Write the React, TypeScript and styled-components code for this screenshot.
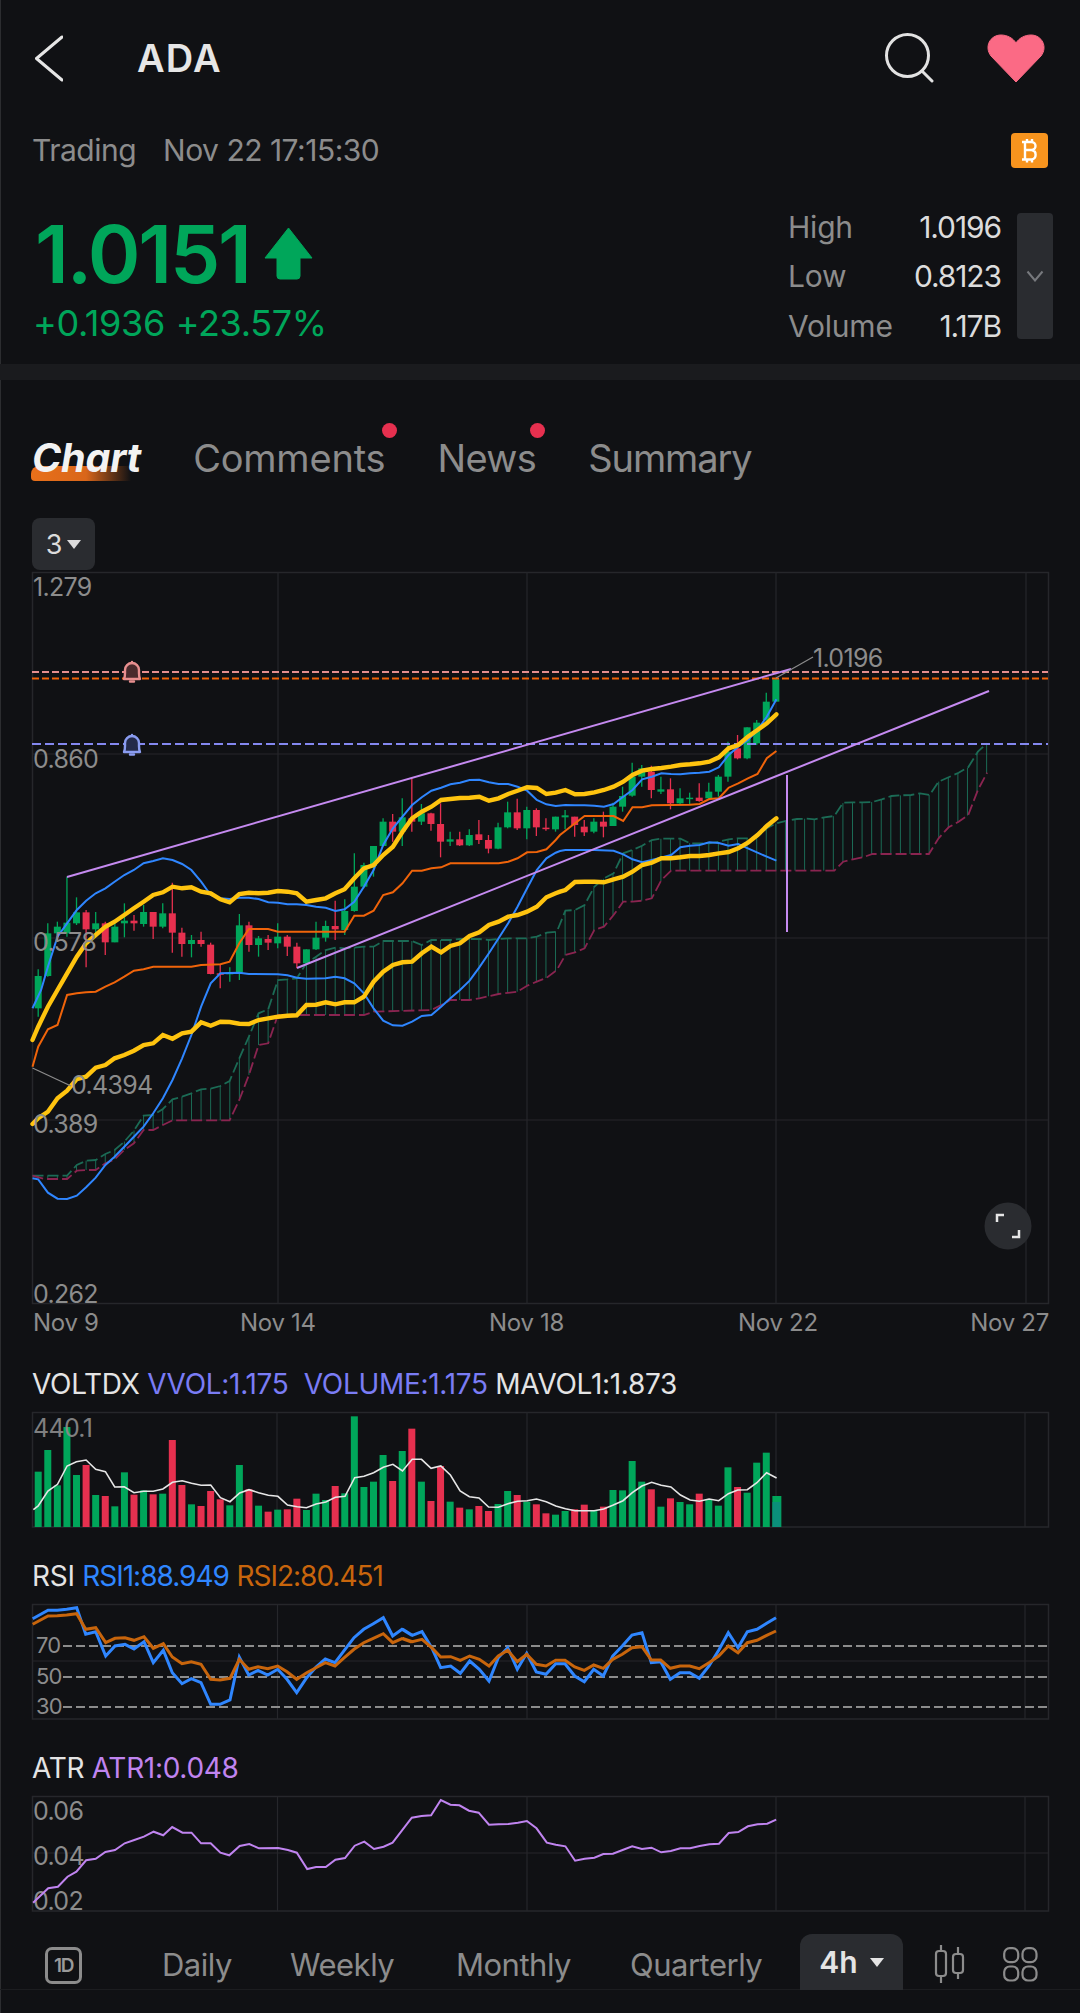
import React from "react";
import styled, { createGlobalStyle } from "styled-components";

const GREEN = "#00a65a";
const RED = "#e6304f";
const GRID = "#26272b";
const MUTED = "#8c8c8c";
const STEP = 9.58;
const START = 38.2;

type Pt = [number, number];

// readings taken from three crops of the chart, each has its own origin and scale
const scaled = (flat: number[], ox: number, oy: number): Pt[] => {
    const out: Pt[] = [];
    for (let i = 0; i < flat.length; i += 2) {
        out.push([ox + flat[i] / 2.8, oy + flat[i + 1] / 3]);
    }
    return out;
};
const a = (flat: number[]) => scaled(flat, 0, 560);
const b = (flat: number[]) => scaled(flat, 520, 620);
const c = (flat: number[]) => scaled(flat, 0, 1000);

const toPath = (pts: Pt[]) => pts.map(([x, y]) => `${x.toFixed(1)},${y.toFixed(1)}`).join(" ");

const interp = (pts: Pt[], x: number) => {
    for (let i = 1; i < pts.length; i++) {
        if (x <= pts[i][0]) {
            const [x0, y0] = pts[i - 1];
            const [x1, y1] = pts[i];
            return y0 + ((y1 - y0) * (x - x0)) / (x1 - x0 || 1);
        }
    }
    return pts[pts.length - 1][1];
};

const blueTop = [
    ...a([91,1345, 115,1290, 134,1220, 161,1130, 188,1090, 215,1050, 241,1022, 268,1000, 295,985, 321,965, 348,945, 375,930, 402,910, 429,903, 456,895, 483,900, 510,912, 536,930, 563,965, 590,1005, 617,1015, 643,1017, 670,1013, 697,1013, 724,1017, 751,1027, 778,1028, 805,1033, 831,1033, 858,1035, 885,1040, 912,1043, 939,1053, 965,1048, 992,1025, 1019,980, 1046,930, 1073,855, 1100,805, 1127,770, 1154,735, 1181,712, 1208,692, 1235,683, 1261,673, 1288,668, 1315,660, 1342,659, 1369,667, 1396,672, 1423,672, 1449,680, 1476,692, 1503,720, 1530,733, 1556,738]),
    ...b([127,555, 154,556, 181,556, 208,557, 235,560, 262,552, 289,530, 315,510, 342,478, 369,470, 396,460, 423,462, 449,463, 476,460, 503,458, 530,455, 557,442, 584,405, 611,380, 638,360, 665,330, 691,290, 718,238]),
];
const blueLow = [
    ...c([91,535, 107,538, 134,578, 161,596, 188,597, 215,587, 241,562, 268,533, 295,495, 321,470, 348,440, 375,410, 402,380, 429,340, 456,295, 483,240, 510,175, 536,105, 563,20]),
    ...a([590,1270, 617,1240, 670,1238, 697,1242, 778,1243, 805,1246, 831,1253, 858,1256, 912,1255, 939,1250, 965,1255, 992,1270, 1019,1300, 1046,1345, 1073,1382, 1100,1396, 1127,1397, 1154,1385, 1181,1368, 1208,1365, 1235,1340, 1261,1315, 1288,1290, 1315,1262, 1342,1222, 1369,1180, 1396,1135, 1423,1090, 1449,1040, 1476,985, 1503,930, 1530,895, 1556,878, 1568,873]),
    ...b([127,690, 208,690, 262,692, 289,703, 315,718, 342,727, 369,720, 423,705, 449,682, 476,677, 503,675, 530,667, 557,669, 584,677, 611,672, 638,685, 665,698, 691,710, 718,722]),
];
const yellowTop = [
    ...a([91,1440, 107,1400, 134,1340, 161,1290, 188,1240, 215,1190, 241,1150, 268,1125, 295,1100, 321,1085, 348,1065, 375,1045, 402,1025, 429,1005, 456,997, 483,980, 510,985, 536,982, 563,995, 590,1000, 617,1018, 643,1027, 670,1002, 697,998, 724,1000, 751,998, 778,993, 805,995, 831,1000, 858,1025, 885,1020, 912,1015, 939,1000, 965,988, 992,955, 1019,925, 1046,915, 1073,885, 1100,860, 1127,815, 1154,775, 1181,755, 1208,740, 1235,720, 1261,717, 1288,714, 1315,713, 1342,710, 1369,722, 1396,715, 1423,702, 1449,692, 1476,682, 1503,684, 1530,702, 1556,698]),
    ...b([127,510, 154,523, 181,522, 208,517, 235,510, 262,500, 289,485, 315,465, 342,452, 369,447, 396,444, 423,440, 449,435, 476,433, 503,430, 530,425, 557,412, 584,385, 611,375, 638,350, 665,330, 691,310, 718,283]),
];
const yellowLow = [
    ...c([91,372, 107,355, 134,335, 161,295, 188,272, 215,237, 241,230, 268,203, 295,195, 321,175, 348,165, 375,152, 402,135, 429,130, 456,105, 483,116, 510,100, 536,95, 563,67, 590,77, 617,65, 643,66, 670,71, 697,72, 724,60, 751,55, 778,50, 805,47, 831,46, 858,15, 885,14, 912,7, 939,13, 965,7, 992,7]),
    ...a([1019,1310, 1046,1265, 1073,1235, 1100,1215, 1127,1207, 1154,1205, 1181,1180, 1208,1160, 1235,1177, 1261,1158, 1288,1150, 1315,1128, 1342,1117, 1369,1095, 1396,1085, 1423,1070, 1449,1065, 1476,1055, 1503,1040, 1530,1012, 1556,1000, 1568,995]),
    ...b([127,810, 154,786, 181,785, 208,785, 235,787, 262,778, 289,770, 315,755, 342,735, 369,728, 396,715, 423,715, 449,712, 476,708, 503,708, 530,705, 557,700, 584,696, 611,685, 638,668, 665,645, 691,618, 718,595]),
];
const orange = [
    ...a([91,1520, 107,1460, 134,1408, 161,1395, 188,1305, 215,1300, 241,1297, 268,1295, 295,1280, 321,1267, 348,1250, 375,1232, 402,1228, 429,1220, 536,1220, 563,1215, 617,1213, 643,1205, 670,1150, 697,1107, 751,1107, 778,1115, 965,1115, 992,1067, 1019,1067, 1046,1052, 1073,1005, 1100,997, 1127,970, 1154,932, 1181,932, 1208,925, 1235,922, 1261,910, 1396,910, 1423,905, 1449,895, 1476,877, 1503,876, 1530,868, 1556,840, 1568,825]),
    ...b([127,632, 154,610, 181,588, 262,588, 289,603, 315,562, 342,562, 369,556, 476,554, 503,552, 530,537, 557,535, 584,503, 611,490, 638,475, 665,462, 691,415, 718,393]),
];
const cloudTop = [
    ...c([91,527, 107,527, 134,527, 161,527, 188,527, 215,495, 241,482, 268,480, 295,462, 321,450, 348,425, 375,392, 402,347, 429,345, 456,327, 483,298, 510,290, 536,280, 563,268, 590,266, 617,258, 643,243, 670,175, 697,110, 724,40, 751,28]),
    ...a([778,1260, 805,1258, 831,1255, 858,1210, 885,1190, 912,1170, 939,1163, 965,1165, 992,1163, 1019,1160, 1046,1160, 1073,1143, 1100,1143, 1127,1143, 1154,1143, 1181,1155, 1208,1140, 1235,1140, 1261,1140, 1288,1137, 1315,1137, 1342,1137, 1369,1140, 1396,1137, 1423,1135, 1449,1135, 1476,1135]),
    ...b([47,950, 75,938, 103,935, 127,872, 154,870, 181,855, 208,800, 235,775, 262,760, 289,700, 315,690, 342,677, 369,660, 396,656, 423,656, 449,656, 476,670, 503,670, 530,670, 557,665, 584,658, 611,655, 638,655, 665,650, 691,625, 718,610, 748,602, 775,597, 802,596, 825,598, 852,592, 880,588, 905,548, 932,547, 960,547, 987,546, 1013,538, 1040,528, 1067,526, 1095,525, 1120,520, 1147,525, 1172,485, 1200,472, 1228,458, 1255,442, 1282,395, 1308,370]),
];
const cloudLow = [
    ...c([91,527, 125,537, 188,537, 215,512, 241,510, 268,510, 295,490, 321,478, 348,450, 375,430, 402,390, 429,390, 456,375, 483,361, 643,361, 670,300, 697,225, 724,135, 751,130, 778,45, 1019,45, 1046,35, 1208,30, 1235,15]),
    ...a([1261,1320, 1315,1320, 1342,1315, 1396,1302, 1449,1295, 1476,1277]),
    ...b([47,1085, 75,1073, 103,1050, 127,1005, 154,997, 181,985, 208,930, 235,920, 262,885, 289,845, 315,845, 342,842, 369,835, 396,780, 423,752, 880,752, 905,725, 932,718, 960,712, 987,702, 1145,702, 1172,655, 1200,622, 1228,605, 1255,585, 1282,510, 1308,458]),
];

// kind, wick top, body top, body bottom, wick bottom
type Candle = [string, number, number, number, number];
const candlesA: Candle[] = [
    ["G",1228,1248,1345,1370], ["G",1090,1120,1248,1250], ["G",1085,1100,1120,1125], ["G",950,1088,1120,1130],
    ["G",1012,1057,1090,1095], ["R",1050,1057,1108,1222], ["G",1056,1090,1108,1125], ["R",1085,1090,1147,1185],
    ["G",1090,1100,1147,1147], ["G",1030,1082,1090,1132], ["R",1065,1082,1090,1112], ["G",1035,1056,1092,1100],
    ["R",1056,1056,1100,1137], ["G",1030,1060,1100,1105], ["R",968,1060,1118,1178], ["R",1103,1118,1152,1190],
    ["G",1125,1140,1152,1192], ["R",1115,1140,1152,1160], ["R",1148,1154,1242,1243], ["R",1215,1240,1243,1285],
    ["G",1222,1238,1243,1265], ["G",1062,1096,1238,1260], ["R",1085,1096,1155,1175], ["G",1128,1135,1155,1190],
    ["R",1125,1137,1148,1170], ["G",1090,1130,1150,1165], ["R",1125,1130,1160,1188], ["R",1148,1160,1210,1225],
    ["G",1168,1168,1210,1210], ["G",1085,1133,1168,1170], ["G",1082,1098,1133,1145], ["R",1022,1098,1108,1140],
    ["G",1018,1053,1110,1125], ["G",880,980,1053,1055], ["G",908,915,980,985], ["G",858,858,918,950],
    ["G",775,785,858,860], ["R",762,785,815,845], ["G",715,772,815,858], ["R",655,775,785,815],
    ["G",732,760,785,795], ["R",758,760,792,812], ["R",730,792,845,892], ["G",815,838,845,858],
    ["R",815,838,856,858], ["G",808,825,856,858], ["R",780,823,840,852], ["R",825,840,866,880],
    ["G",788,802,866,868], ["G",725,757,802,805], ["R",716,757,805,810], ["G",740,750,805,838],
    ["R",745,750,802,828], ["R",775,803,807,812], ["G",770,770,808,815],
];
const candlesB: Candle[] = [
    ["G",570,586,592,628], ["R",590,590,615,650], ["R",600,620,637,648], ["G",595,605,635,640],
    ["R",575,605,620,652], ["G",548,560,618,618], ["G",500,528,560,575], ["G",428,470,527,530],
    ["G",435,445,470,500], ["R",437,455,510,535], ["G",470,508,515,522], ["R",475,508,550,568],
    ["G",505,535,550,553], ["G",518,533,537,555], ["R",490,533,543,545], ["G",488,515,535,540],
    ["G",465,470,515,530], ["G",365,395,470,485], ["R",345,385,415,418], ["G",322,322,415,418],
    ["G",300,308,370,375], ["G",218,245,300,310], ["G",178,178,245,245],
];
const candles = [
    ...candlesA.map(([k, p, q, r, s]) => ({ k, w1: 560 + p / 3, t: 560 + q / 3, bt: 560 + r / 3, w2: 560 + s / 3 })),
    ...candlesB.map(([k, p, q, r, s]) => ({ k, w1: 620 + p / 3, t: 620 + q / 3, bt: 620 + r / 3, w2: 620 + s / 3 })),
];

const volumeTops: [string, number][] = ([
    "G362","G297","G403","G228","G372","R342","G432","R435","G466","G364","R431","G418","R430","G428","R267","R402","G460","R465","R420","R445","G463","G342","R415","G464","R482","G476","R475","R443","G477","G428","G447","R405","G427","G196","G408","G392","G312","R390","G300","R233","G392","R450","R345","G452","R470","G475","R465","R480","G459","G420","R432","G452","R460",
    "R487","G491","G480","R475","R461","G478","R467","G417","G418","G330","G392","R415","G467","R442","G453","G460","R428","G445","G464","G349","R408","G425","G335","G305","G435",
]).map((s) => [s[0], Number(s.slice(1))]);

const volumeLine: Pt[] = [
    ...[97,476, 111,465, 139,420, 167,400, 195,345, 222,332, 250,327, 278,355, 306,362, 333,408, 361,407, 389,425, 417,421, 445,421, 473,414, 501,394, 529,389, 556,397, 584,403, 612,402, 640,440, 668,452, 696,426, 723,416, 751,425, 779,433, 807,436, 835,462, 863,467, 890,470, 918,459, 946,453, 974,439, 1002,436, 1030,380, 1057,376, 1085,365, 1113,349, 1141,340, 1169,360, 1197,325, 1224,325, 1252,352, 1280,345, 1308,372, 1336,420, 1363,437, 1391,441, 1419,468, 1447,469, 1475,458, 1503,451, 1531,449, 1558,444]
        .reduce<Pt[]>((acc, v, i, arr) => (i % 2 ? acc : [...acc, [v / 2.904, 1350 + arr[i + 1] / 3]]), []),
    ...[18,452, 46,465, 74,473, 102,479, 129,479, 157,479, 185,474, 213,462, 241,449, 268,425, 296,405, 324,394, 352,403, 380,408, 408,432, 436,447, 463,451, 491,444, 519,449, 547,428, 574,417, 602,416, 630,395, 658,365, 687,381]
        .reduce<Pt[]>((acc, v, i, arr) => (i % 2 ? acc : [...acc, [540 + v / 2.904, 1350 + arr[i + 1] / 3]]), []),
];

const rsiPoints = (left: number[], right: number[]): Pt[] => {
    const out: Pt[] = [];
    for (let i = 0; i < left.length; i += 2) out.push([20 + left[i] / 3, 1590 + left[i + 1] / 3]);
    for (let i = 0; i < right.length; i += 2) out.push([400 + right[i] / 3, 1590 + right[i + 1] / 3]);
    return out;
};
const rsiBlue = rsiPoints(
    [38,83, 84,58, 112,58, 140,55, 170,50, 197,130, 227,122, 257,195, 285,165, 315,160, 342,174, 372,152, 400,215, 430,178, 457,245, 486,278, 514,263, 543,275, 572,340, 600,340, 630,327, 658,198, 686,252, 714,238, 743,252, 773,235, 801,265, 830,305, 860,260, 888,228, 916,204, 945,215, 973,178, 1002,140, 1031,115, 1060,98, 1090,80, 1118,135, 1146,115, 1175,133],
    [8,115, 37,133, 66,122, 95,170, 122,230, 152,225, 181,247, 209,210, 238,235, 267,270, 295,200, 323,170, 352,235, 380,187, 409,243, 438,250, 467,218, 495,218, 524,255, 553,272, 581,235, 610,255, 638,195, 667,165, 696,132, 726,125, 754,215, 782,212, 811,265, 840,245, 869,245, 898,262, 927,225, 956,178, 985,125, 1014,170, 1042,122, 1071,115, 1100,97, 1128,80],
);
const rsiOrange = rsiPoints(
    [38,100, 84,75, 112,74, 140,72, 170,68, 197,115, 227,110, 257,155, 285,142, 315,140, 342,148, 372,137, 400,172, 430,158, 457,198, 486,218, 514,212, 543,220, 572,265, 600,267, 630,262, 658,205, 686,235, 714,227, 743,233, 773,225, 801,242, 830,265, 860,245, 888,230, 916,215, 945,225, 973,200, 1002,175, 1031,155, 1060,142, 1090,128, 1118,155, 1146,143, 1175,153],
    [8,142, 37,152, 66,145, 95,170, 122,198, 152,197, 181,208, 209,195, 238,205, 267,225, 295,195, 323,178, 352,212, 380,190, 409,220, 438,225, 467,208, 495,208, 524,228, 553,238, 581,222, 610,232, 638,205, 667,190, 696,170, 726,167, 754,207, 782,207, 811,232, 840,225, 869,225, 898,233, 927,215, 956,195, 985,165, 1014,185, 1042,155, 1071,148, 1100,133, 1128,120],
);
const atrRaw = [48,605, 70,562, 84,557, 98,527, 111,512, 125,478, 139,473, 153,453, 167,447, 181,427, 195,417, 209,407, 223,392, 237,403, 250,378, 265,395, 278,395, 292,427, 306,427, 320,455, 333,463, 348,435, 362,429, 376,442, 404,441, 418,447, 431,455, 446,504, 459,498, 473,498, 487,476, 501,471, 515,434, 529,422, 543,444, 557,437, 570,425, 598,350, 612,345, 626,343, 640,297, 654,311, 667,313, 681,329, 695,335, 710,371, 724,370, 738,369, 752,365, 765,360, 779,382, 794,425, 807,431, 821,436, 835,479, 849,473, 863,470, 876,459, 890,458, 904,447, 918,436, 932,444, 946,440, 960,454, 974,450, 988,442, 1002,442, 1016,435, 1030,430, 1044,428, 1058,396, 1072,393, 1086,376, 1100,370, 1114,368, 1127,356];
const atrLine: Pt[] = [];
for (let i = 0; i < atrRaw.length; i += 2) atrLine.push([atrRaw[i] / 1.452, 1700 + atrRaw[i + 1] / 3]);

const GlobalStyle = createGlobalStyle`
  html, body {
    margin: 0;
    padding: 0;
    background: #101114;
  }
  * {
    box-sizing: border-box;
  }
`;

const Page = styled.div`
  width: 1080px;
  height: 2013px;
  background: #101114;
  box-shadow: inset 1px 0 #2c2d30;
  font-family: Inter, "Noto Sans", sans-serif;
  color: #e6e6e6;
  overflow: hidden;
`;

const Header = styled.header`
  height: 116px;
  display: flex;
  align-items: center;
  padding: 0 35px;
`;

const Symbol = styled.h1`
  margin: 0 0 0 74px;
  font-size: 38px;
  font-weight: 600;
  letter-spacing: 1.2px;
  flex: 1;
`;

const HeaderActions = styled.div`
  display: flex;
  align-items: center;
  gap: 52px;
`;

const StatusRow = styled.div`
  height: 68px;
  display: flex;
  align-items: center;
  justify-content: space-between;
  padding: 0 32px;
  color: ${MUTED};
  font-size: 30px;
  letter-spacing: -0.5px;
`;

const StatusText = styled.div`
  display: flex;
  gap: 27px;
`;

const CoinBadge = styled.div`
  width: 37px;
  height: 35px;
  background: #f7941e;
  border-radius: 4px;
  display: flex;
  align-items: center;
  justify-content: center;
`;

const QuoteRow = styled.section`
  height: 180px;
  display: flex;
  justify-content: space-between;
  padding: 29px 27px 0 35px;
`;

const PriceLine = styled.div`
  display: flex;
  align-items: center;
  gap: 14px;
  height: 80px;
  color: ${GREEN};
  font-size: 80px;
  font-weight: 600;
  letter-spacing: -2.2px;
`;

const ChangeLine = styled.div`
  margin: 8px 0 0 -2px;
  color: ${GREEN};
  font-size: 36px;
  letter-spacing: -0.35px;
  word-spacing: 1px;
`;

const Stats = styled.div`
  display: flex;
  gap: 16px;
`;

const StatGrid = styled.dl`
  margin: -11px 0 0;
  width: 213px;
  height: 126px;
  display: grid;
  grid-template-columns: 1fr auto;
  grid-auto-rows: 49.5px;
  align-items: center;
  font-size: 30px;
`;

const StatLabel = styled.dt`
  color: ${MUTED};
  letter-spacing: -0.2px;
`;

const StatValue = styled.dd`
  margin: 0;
  text-align: right;
  color: #dcdcdc;
  letter-spacing: -1.1px;
`;

const ExpandButton = styled.div`
  width: 36px;
  height: 126px;
  background: #2a2c30;
  border-radius: 4px;
  display: flex;
  align-items: center;
  justify-content: center;
`;

const Band = styled.div`
  height: 16px;
  background: #1a1b1e;
`;

const Tabs = styled.nav`
  height: 138px;
  display: flex;
  align-items: flex-start;
  gap: 52px;
  padding: 56px 0 0 32px;
`;

const Tab = styled.div<{ $active?: boolean; $spacing?: number }>`
  position: relative;
  height: 44px;
  line-height: 44px;
  font-size: ${(props) => (props.$active ? 39.5 : 38)}px;
  letter-spacing: ${(props) => props.$spacing ?? -0.2}px;
  color: ${(props) => (props.$active ? "#f2f2f2" : MUTED)};
  font-weight: ${(props) => (props.$active ? 700 : 400)};
  font-style: ${(props) => (props.$active ? "italic" : "normal")};
`;

const TabMark = styled.span`
  position: absolute;
  left: -1px;
  bottom: -1px;
  width: 100px;
  height: 15px;
  border-radius: 8px 0 0 4px;
  background: linear-gradient(90deg, #e8701a 0%, #d9661a 55%, rgba(232, 112, 26, 0) 100%);
`;

const TabLabel = styled.span`
  position: relative;
  z-index: 1;
`;

const RedDot = styled.span<{ $right: number }>`
  position: absolute;
  right: ${(props) => props.$right}px;
  top: -13px;
  width: 15px;
  height: 15px;
  border-radius: 50%;
  background: ${RED};
`;

const ToolRow = styled.div`
  height: 54px;
  padding-left: 32px;
`;

const PeriodButton = styled.div`
  width: 63px;
  height: 52px;
  border-radius: 8px;
  background: #2a2c30;
  display: flex;
  align-items: center;
  justify-content: center;
  gap: 5px;
  font-size: 27px;
  color: #dcdcdc;
`;

const Caret = styled.span`
  width: 0;
  height: 0;
  border-left: 7px solid transparent;
  border-right: 7px solid transparent;
  border-top: 9px solid currentColor;
`;

const ChartSvg = styled.svg`
  display: block;
  margin-left: 32px;
  overflow: visible;
`;

const AxisText = styled.text`
  font-size: 25px;
  letter-spacing: -0.7px;
  fill: ${MUTED};
`;

const SmallAxisText = styled(AxisText)`
  font-size: 22px;
  letter-spacing: -0.8px;
`;

const DateAxis = styled.div`
  height: 36px;
  margin: 0 31px 25px 33px;
  padding-bottom: 2px;
  display: grid;
  grid-template-columns: 207px 249px 249px 1fr auto;
  align-items: center;
  color: ${MUTED};
  font-size: 24px;
  letter-spacing: -0.3px;
  white-space: nowrap;
`;

const IndicatorTitle = styled.div`
  height: 46px;
  padding: 0 32px 10px;
  line-height: 36px;
  font-size: 28px;
  letter-spacing: -0.3px;
  color: #e4e4e4;
  white-space: pre;
`;

const Value = styled.span<{ $color: string; $tight?: boolean }>`
  color: ${(props) => props.$color};
  letter-spacing: ${(props) => (props.$tight ? "-1px" : "inherit")};
`;

const Panel = styled.section`
  margin-bottom: 30px;
`;

const BottomBar = styled.footer`
  height: 78px;
  border-bottom: 1px solid #1c1d20;
  position: relative;
`;

const BarSlot = styled.div<{ $left: number }>`
  position: absolute;
  left: ${(props) => props.$left}px;
  top: 35px;
  line-height: 36px;
  font-size: 31px;
  letter-spacing: -0.5px;
  color: ${MUTED};
`;

const DayIcon = styled.div`
  position: absolute;
  left: 45px;
  top: 35px;
  width: 37px;
  height: 37px;
  border: 3px solid #8c8c8c;
  border-radius: 7px;
  display: flex;
  align-items: center;
  justify-content: center;
  font-size: 19px;
  font-weight: 600;
  color: #9a9a9a;
  letter-spacing: -1.5px;
`;

const IntervalPill = styled.div`
  position: absolute;
  left: 800px;
  top: 22px;
  width: 103px;
  height: 56px;
  border-radius: 12px 12px 0 0;
  background: #2a2c30;
  display: flex;
  align-items: center;
  justify-content: center;
  gap: 12px;
  font-size: 30px;
  font-weight: 600;
  color: #e4e4e4;
`;

const ToolIcons = styled.div`
  position: absolute;
  left: 932px;
  top: 33px;
  display: flex;
  gap: 38px;
  align-items: center;
`;

const Frame: React.FC<{ x?: number; y: number; w?: number; h: number }> = ({ x = 32.5, y, w = 1016, h }) => (
    <rect x={x} y={y} width={w} height={h} fill="none" stroke={GRID} strokeWidth="1.5" />
);

const Bell: React.FC<{ x: number; y: number; stroke: string; fill: string }> = ({ x, y, stroke, fill }) => (
    <g transform={`translate(${x} ${y})`}>
        <path d="M-8 7 Q-7 5 -7 1 V-2 A7 7 0 0 1 7 -2 V1 Q7 5 8 7 Z" fill={fill} stroke={stroke} strokeWidth="2.4" strokeLinejoin="round" />
        <path d="M0 -10 V-9 M-2 9.5 H2" stroke={stroke} strokeWidth="2.4" strokeLinecap="round" />
    </g>
);

const MainChart = () => {
    const verticals = [];
    for (let i = 0; i < 100; i++) {
        const x = START + i * STEP;
        verticals.push(<line key={i} x1={x} x2={x} y1={interp(cloudTop, x)} y2={interp(cloudLow, x)} stroke="#1b6b55" strokeWidth="1" />);
    }
    return (
        <ChartSvg width="1017" height="733" viewBox="32 572 1017 733">
            <Frame y={572.5} h={731} />
            {[278, 527, 776, 1026].map((x) => <line key={x} x1={x} x2={x} y1={572} y2={1304} stroke={GRID} strokeWidth="1.2" />)}
            {[754, 938, 1120].map((y) => <line key={y} x1={32} x2={1048} y1={y} y2={y} stroke={GRID} strokeWidth="1.2" />)}

            {verticals}
            <polyline points={toPath(cloudTop)} fill="none" stroke="#1b6b55" strokeWidth="1.8" strokeDasharray="11 4" />
            <polyline points={toPath(cloudLow)} fill="none" stroke="#8a2450" strokeWidth="1.8" strokeDasharray="11 4" />

            {candles.map((k, i) => {
                const x = START + i * STEP;
                const color = k.k === "G" ? GREEN : RED;
                return (
                    <g key={i}>
                        <line x1={x} x2={x} y1={k.w1} y2={k.w2} stroke={color} strokeWidth="1.3" />
                        <rect x={x - 3.5} y={k.t} width="7" height={Math.max(k.bt - k.t, 1.5)} fill={color} />
                    </g>
                );
            })}

            <line x1={32} x2={1048} y1={672} y2={672} stroke="#e88f8f" strokeWidth="2" strokeDasharray="7 3" />
            <line x1={32} x2={1048} y1={678.5} y2={678.5} stroke="#f0640a" strokeWidth="2" strokeDasharray="7 3" />
            <line x1={32} x2={1048} y1={744} y2={744} stroke="#8488f0" strokeWidth="1.8" strokeDasharray="9 4" />

            <polyline points={toPath(orange)} fill="none" stroke="#f0640a" strokeWidth="2" />
            <polyline points={toPath(blueTop)} fill="none" stroke="#2f86ff" strokeWidth="2" />
            <polyline points={toPath(blueLow)} fill="none" stroke="#2f86ff" strokeWidth="2" />
            <polyline points={toPath(yellowTop)} fill="none" stroke="#ffc40f" strokeWidth="4.4" strokeLinecap="round" />
            <polyline points={toPath(yellowLow)} fill="none" stroke="#ffc40f" strokeWidth="4.4" strokeLinecap="round" />

            <line x1={67} y1={877} x2={791} y2={669} stroke="#c58af0" strokeWidth="2" />
            <line x1={297} y1={968} x2={989} y2={691} stroke="#c58af0" strokeWidth="2" />
            <line x1={787} y1={775} x2={787} y2={932} stroke="#c58af0" strokeWidth="2" />

            <Bell x={132} y={672} stroke="#e88f8f" fill="#4a2a2c" />
            <Bell x={132} y={745} stroke="#8a9cf0" fill="#232a4a" />

            <line x1={776} y1={678} x2={813} y2={657} stroke={MUTED} strokeWidth="1.2" />
            <line x1={32.5} y1={1068} x2={71} y2={1086} stroke={MUTED} strokeWidth="1.2" />

            <AxisText x={33} y={596}>1.279</AxisText>
            <AxisText x={33} y={768}>0.860</AxisText>
            <AxisText x={33} y={951}>0.578</AxisText>
            <AxisText x={33} y={1133}>0.389</AxisText>
            <AxisText x={33} y={1303}>0.262</AxisText>
            <AxisText x={813} y={667}>1.0196</AxisText>
            <AxisText x={71} y={1094}>0.4394</AxisText>

            <circle cx={1008} cy={1226} r={23.5} fill="#2a2c30" />
            <path d="M1004 1215 H997 V1222 M1012 1237 H1019 V1230" fill="none" stroke="#e6e6e6" strokeWidth="2.5" />
        </ChartSvg>
    );
};

const VolumeChart = () => (
    <ChartSvg width="1017" height="116" viewBox="32 1411 1017 116">
        <Frame y={1411.5} h={114.5} />
        {[277, 527, 776, 1025].map((x) => <line key={x} x1={x} x2={x} y1={1411} y2={1526} stroke={GRID} strokeWidth="1.2" />)}
        {volumeTops.map(([kind, top], i) => {
            const x = START + i * STEP;
            const y = 1350 + top / 3;
            return <rect key={i} x={x - 3.5} y={y} width={i === 77 ? 9 : 7} height={1526 - y} fill={kind === "G" ? GREEN : RED} />;
        })}
        <rect x={772.5} y={1501} width={8} height={25} fill="#0b8f7a" />
        <polyline points={toPath(volumeLine)} fill="none" stroke="#e6e6e6" strokeWidth="1.6" />
        <AxisText x={33} y={1436} opacity={0.9}>440.1</AxisText>
    </ChartSvg>
);

const RsiChart = () => (
    <ChartSvg width="1017" height="116" viewBox="32 1603 1017 116">
        <Frame y={1603.5} h={114.5} />
        {[277.5, 527, 776, 1025].map((x) => <line key={x} x1={x} x2={x} y1={1603} y2={1718} stroke={GRID} strokeWidth="1.2" />)}
        <line x1={32} x2={1048} y1={1660} y2={1660} stroke={GRID} strokeWidth="1.2" />
        {[1645, 1676, 1706].map((y) => <line key={y} x1={63} x2={1048} y1={y} y2={y} stroke={MUTED} strokeWidth="1.8" strokeDasharray="9 4" />)}
        <SmallAxisText x={36} y={1652}>70</SmallAxisText>
        <SmallAxisText x={36} y={1683}>50</SmallAxisText>
        <SmallAxisText x={36} y={1713}>30</SmallAxisText>
        <polyline points={toPath(rsiBlue)} fill="none" stroke="#2f86ff" strokeWidth="3" />
        <polyline points={toPath(rsiOrange)} fill="none" stroke="#c8650c" strokeWidth="3" />
    </ChartSvg>
);

const AtrChart = () => (
    <ChartSvg width="1017" height="116" viewBox="32 1795 1017 116">
        <Frame y={1795.5} h={114.5} />
        {[277.5, 527, 776, 1025].map((x) => <line key={x} x1={x} x2={x} y1={1795} y2={1910} stroke={GRID} strokeWidth="1.2" />)}
        <line x1={32} x2={1048} y1={1852} y2={1852} stroke={GRID} strokeWidth="1.2" />
        <AxisText x={33} y={1819}>0.06</AxisText>
        <AxisText x={33} y={1864}>0.04</AxisText>
        <AxisText x={33} y={1909}>0.02</AxisText>
        <polyline points={toPath(atrLine)} fill="none" stroke="#c084f0" strokeWidth="2" />
    </ChartSvg>
);

const App: React.FC = () => (
    <Page>
        <GlobalStyle />
        <Header>
            <svg width="28" height="47" viewBox="0 0 28 47" fill="none">
                <path d="M27 2 L1.5 23.5 L27 45" stroke="#e6e6e6" strokeWidth="3" strokeLinecap="round" strokeLinejoin="round" />
            </svg>
            <Symbol>ADA</Symbol>
            <HeaderActions>
                <svg width="50" height="50" viewBox="0 0 50 50" fill="none">
                    <circle cx="22.5" cy="22.5" r="21" stroke="#e2e2e2" strokeWidth="3" />
                    <path d="M37 38 L47 48" stroke="#e2e2e2" strokeWidth="3" strokeLinecap="round" />
                </svg>
                <svg width="58" height="49" viewBox="0 0 58 49">
                    <path d="M29 48 L4 22 C-3 13 3 1 14 1 C20 1 26 4 29 9 C32 4 38 1 44 1 C55 1 61 13 54 22 Z" fill="#fb6a85" stroke="#fb6a85" strokeLinejoin="round" />
                </svg>
            </HeaderActions>
        </Header>

        <StatusRow>
            <StatusText>
                <span>Trading</span>
                <span>Nov 22 17:15:30</span>
            </StatusText>
            <CoinBadge>
                <svg width="20" height="25" viewBox="0 0 20 25" fill="none" stroke="#fff" strokeWidth="2.4">
                    <path d="M2 4 H11.5 A4 4 0 0 1 11.5 12 H4 M11.5 12 A4.8 4.8 0 0 1 11.5 21.5 H2 M5 4 V21.5 M7 1 V4 M12 1 V4 M7 21.5 V24.5 M12 21.5 V24.5" />
                </svg>
            </CoinBadge>
        </StatusRow>

        <QuoteRow>
            <div>
                <PriceLine>
                    <span>1.0151</span>
                    <svg width="49" height="53" viewBox="0 0 49 53">
                        <path d="M24.5 1 L48 31 H36 V49 Q36 52 33 52 H16 Q13 52 13 49 V31 H1 Z" fill={GREEN} stroke={GREEN} strokeLinejoin="round" />
                    </svg>
                </PriceLine>
                <ChangeLine>+0.1936 +23.57%</ChangeLine>
            </div>
            <Stats>
                <StatGrid>
                    <StatLabel>High</StatLabel>
                    <StatValue>1.0196</StatValue>
                    <StatLabel>Low</StatLabel>
                    <StatValue>0.8123</StatValue>
                    <StatLabel>Volume</StatLabel>
                    <StatValue>1.17B</StatValue>
                </StatGrid>
                <ExpandButton>
                    <svg width="18" height="12" viewBox="0 0 18 12" fill="none">
                        <path d="M1.5 1.5 L9 10.5 L16.5 1.5" stroke="#77797d" strokeWidth="2" />
                    </svg>
                </ExpandButton>
            </Stats>
        </QuoteRow>

        <Band />

        <Tabs>
            <Tab $active>
                <TabMark />
                <TabLabel>Chart</TabLabel>
            </Tab>
            <Tab>Comments<RedDot $right={-12} /></Tab>
            <Tab $spacing={-0.6}>News<RedDot $right={-9} /></Tab>
            <Tab $spacing={-1.1}>Summary</Tab>
        </Tabs>

        <ToolRow>
            <PeriodButton>3<Caret /></PeriodButton>
        </ToolRow>

        <MainChart />

        <DateAxis>
            <span>Nov 9</span>
            <span>Nov 14</span>
            <span>Nov 18</span>
            <span>Nov 22</span>
            <span>Nov 27</span>
        </DateAxis>

        <Panel>
            <IndicatorTitle>
                VOLTDX <Value $color="#7a7cf5">VVOL:1.175  VOLUME:1.175</Value> MAVOL1:1.873
            </IndicatorTitle>
            <VolumeChart />
        </Panel>
        <Panel>
            <IndicatorTitle>
                RSI <Value $color="#2f86ff" $tight>RSI1:88.949</Value> <Value $color="#c8650c" $tight>RSI2:80.451</Value>
            </IndicatorTitle>
            <RsiChart />
        </Panel>
        <section>
            <IndicatorTitle>
                ATR <Value $color="#c084f0">ATR1:0.048</Value>
            </IndicatorTitle>
            <AtrChart />
        </section>

        <BottomBar>
            <DayIcon>1D</DayIcon>
            <BarSlot $left={162}>Daily</BarSlot>
            <BarSlot $left={290}>Weekly</BarSlot>
            <BarSlot $left={456}>Monthly</BarSlot>
            <BarSlot $left={630}>Quarterly</BarSlot>
            <IntervalPill>
                4h
                <Caret />
            </IntervalPill>
            <ToolIcons>
                <svg width="33" height="38" viewBox="0 0 33 38" fill="none" stroke="#8c8c8c" strokeWidth="2.2">
                    <rect x="4" y="6" width="10" height="25" rx="3" />
                    <path d="M9 0 V6 M9 31 V38" />
                    <rect x="21" y="9" width="10" height="19" rx="3" />
                    <path d="M26 2 V9 M26 28 V34" />
                </svg>
                <svg width="35" height="35" viewBox="0 0 35 35" fill="none" stroke="#8c8c8c" strokeWidth="2.2">
                    <rect x="1.2" y="1.2" width="14" height="14" rx="5.5" />
                    <rect x="19.5" y="1.2" width="14" height="14" rx="5.5" />
                    <rect x="1.2" y="19.5" width="14" height="14" rx="5.5" />
                    <rect x="19.5" y="19.5" width="14" height="14" rx="5.5" />
                </svg>
            </ToolIcons>
        </BottomBar>
    </Page>
);

export default App;
